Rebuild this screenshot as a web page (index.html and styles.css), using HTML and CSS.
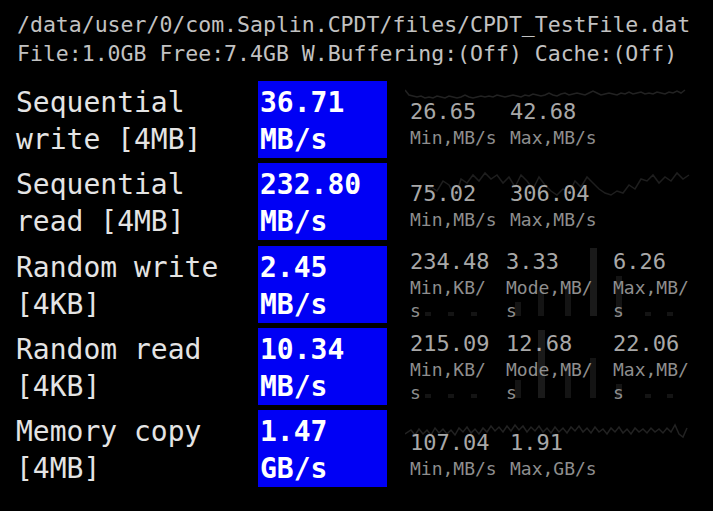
FILE: index.html
```html
<!DOCTYPE html>
<html>
<head>
<meta charset="utf-8">
<link rel="stylesheet" href="styles.css">
</head>
<body>
<div class="app">
  <div class="header">
    <div>/data/user/0/com.Saplin.CPDT/files/CPDT_TestFile.dat</div>
    <div>File:1.0GB Free:7.4GB W.Buffering:(Off) Cache:(Off)</div>
  </div>
  <div class="rows">
    <div class="row">
      <div class="label">Sequential write [4MB]</div>
      <div class="value">36.71<br>MB/s</div>
      <div class="cell">
        <svg class="chart" width="295" height="76" viewBox="0 0 295 76">
          <polyline fill="none" stroke="#222" stroke-width="1.5" points="0,9 4,14 8,15 12,16 16,15 20,17 24,16 28,17 32,15 36,16 40,17 44,15 48,16 52,17 56,16 60,14 64,16 68,17 72,16 76,15 80,16 84,15 88,16 92,14 96,15 100,16 104,15 108,14 112,15 116,16 120,14 124,15 128,13 132,14 136,15 140,14 144,12 148,14 152,15 156,13 160,12 164,14 168,13 172,12 176,13 180,14 184,12 188,10 192,12 196,14 200,13 204,12 208,13 212,14 216,12 220,13 224,11 228,13 232,12 236,11 240,13 244,12 248,13 252,11 256,12 260,13 264,11 268,12 272,10 276,12 280,9"/>
        </svg>
        <div class="stats two">
          <div class="col"><div class="num">26.65</div><div class="unit">Min,MB/s</div></div>
          <div class="col"><div class="num">42.68</div><div class="unit">Max,MB/s</div></div>
        </div>
      </div>
    </div>
    <div class="row">
      <div class="label">Sequential read [4MB]</div>
      <div class="value">232.80<br>MB/s</div>
      <div class="cell">
        <svg class="chart" width="295" height="76" viewBox="0 0 295 76">
          <polyline fill="none" stroke="#1e1e1e" stroke-width="1.5" points="20,30 26,24 32,28 38,18 44,22 50,34 56,16 62,20 68,12 74,18 80,10 86,16 92,12 98,20 104,14 110,24 116,12 122,18 128,26 134,14 140,22 146,28 152,32 158,26 164,30 170,18 176,24 182,14 188,20 194,26 200,30 206,32 212,28 218,30 224,22 230,26 236,16 242,18 248,12 254,20 260,14 266,18 272,10 278,16 284,12"/>
        </svg>
        <div class="stats two">
          <div class="col"><div class="num">75.02</div><div class="unit">Min,MB/s</div></div>
          <div class="col"><div class="num">306.04</div><div class="unit">Max,MB/s</div></div>
        </div>
      </div>
    </div>
    <div class="row">
      <div class="label">Random write [4KB]</div>
      <div class="value">2.45<br>MB/s</div>
      <div class="cell">
        <svg class="chart" width="295" height="76" viewBox="0 0 295 76">
          <g fill="#141414">
            <rect x="20" y="66" width="6" height="4"/>
            <rect x="43" y="66" width="6" height="4"/>
            <rect x="66" y="66" width="6" height="4"/>
            <rect x="110" y="56" width="6" height="14"/>
            <rect x="133" y="44" width="6" height="26"/>
            <rect x="160" y="40" width="6" height="30"/>
            <rect x="211" y="30" width="6" height="40"/>
            <rect x="240" y="66" width="6" height="4"/>
            <rect x="262" y="66" width="6" height="4"/>
          </g>
          <rect x="185" y="2" width="7" height="68" fill="#1a1a1a"/>
        </svg>
        <div class="stats three">
          <div class="col"><div class="num">234.48</div><div class="unit">Min,KB/<br>s</div></div>
          <div class="col"><div class="num">3.33</div><div class="unit">Mode,MB/<br>s</div></div>
          <div class="col"><div class="num">6.26</div><div class="unit">Max,MB/<br>s</div></div>
        </div>
      </div>
    </div>
    <div class="row">
      <div class="label">Random read [4KB]</div>
      <div class="value">10.34<br>MB/s</div>
      <div class="cell">
        <svg class="chart" width="295" height="76" viewBox="0 0 295 76">
          <g fill="#141414">
            <rect x="20" y="66" width="6" height="4"/>
            <rect x="43" y="66" width="6" height="4"/>
            <rect x="66" y="66" width="6" height="4"/>
            <rect x="110" y="52" width="6" height="18"/>
            <rect x="160" y="36" width="6" height="34"/>
            <rect x="185" y="30" width="6" height="40"/>
            <rect x="211" y="56" width="6" height="14"/>
            <rect x="240" y="66" width="6" height="4"/>
            <rect x="262" y="66" width="6" height="4"/>
          </g>
          <rect x="133" y="2" width="7" height="68" fill="#1a1a1a"/>
        </svg>
        <div class="stats three">
          <div class="col"><div class="num">215.09</div><div class="unit">Min,KB/<br>s</div></div>
          <div class="col"><div class="num">12.68</div><div class="unit">Mode,MB/<br>s</div></div>
          <div class="col"><div class="num">22.06</div><div class="unit">Max,MB/<br>s</div></div>
        </div>
      </div>
    </div>
    <div class="row">
      <div class="label">Memory copy [4MB]</div>
      <div class="value">1.47<br>GB/s</div>
      <div class="cell">
        <svg class="chart" width="295" height="76" viewBox="0 0 295 76">
          <polyline fill="none" stroke="#222" stroke-width="1.5" points="0,24 6,20 10,25 14,19 18,24 22,20 26,25 30,18 34,23 38,19 42,24 46,20 50,25 54,18 58,22 62,17 66,23 70,19 74,24 78,18 82,22 86,16 90,21 94,17 98,22 102,16 106,21 110,15 114,20 118,16 122,22 126,17 130,21 134,16 138,22 142,18 146,23 150,17 154,22 158,18 162,23 166,17 170,21 174,16 178,22 182,18 186,23 190,17 194,22 198,19 202,24 206,18 210,22 214,17 218,23 222,19 226,24 230,18 234,22 238,19 242,23 246,18 250,22 254,19 258,23 262,18 266,22 270,15 274,24 278,27 282,18"/>
        </svg>
        <div class="stats two low">
          <div class="col"><div class="num">107.04</div><div class="unit">Min,MB/s</div></div>
          <div class="col"><div class="num">1.91</div><div class="unit">Max,GB/s</div></div>
        </div>
      </div>
    </div>
  </div>
</div>
</body>
</html>
```
FILE: styles.css
```css
html, body {
  margin: 0;
  padding: 0;
  background: #000;
}
body {
  width: 713px;
  height: 511px;
  overflow: hidden;
  font-family: "DejaVu Sans Mono", "Liberation Mono", monospace;
}
.app {
  display: flex;
  flex-direction: column;
}
.header {
  padding: 10px 0 0 17px;
  font-size: 21.5px;
  line-height: 29px;
  color: #c2c2c2;
  white-space: nowrap;
}
.rows {
  margin-top: 13px;
  display: flex;
  flex-direction: column;
  gap: 6.25px;
}
.row {
  display: grid;
  grid-template-columns: 242px 129px 1fr;
  height: 76px;
  padding-left: 16px;
}
.label {
  font-size: 28px;
  line-height: 37px;
  padding-top: 3px;
  color: #e4e4e4;
}
.value {
  background: #0000f5;
  color: #fff;
  font-weight: bold;
  font-size: 28px;
  line-height: 37px;
  padding: 3px 0 0 2px;
}
.cell {
  position: relative;
  padding-left: 23px;
  display: flex;
  align-items: center;
}
.chart {
  position: absolute;
  left: 18px;
  top: 0;
}
.stats {
  position: relative;
  display: grid;
}
.stats.two {
  grid-template-columns: 100px 100px;
  margin-top: 6px;
}
.stats.low {
  margin-top: 10px;
}
.stats.three {
  grid-template-columns: 96px 107px 1fr;
}
.num {
  font-size: 22px;
  line-height: 29px;
  color: #a8a8a8;
}
.unit {
  font-size: 18px;
  line-height: 23px;
  color: #8e8e8e;
}
```
